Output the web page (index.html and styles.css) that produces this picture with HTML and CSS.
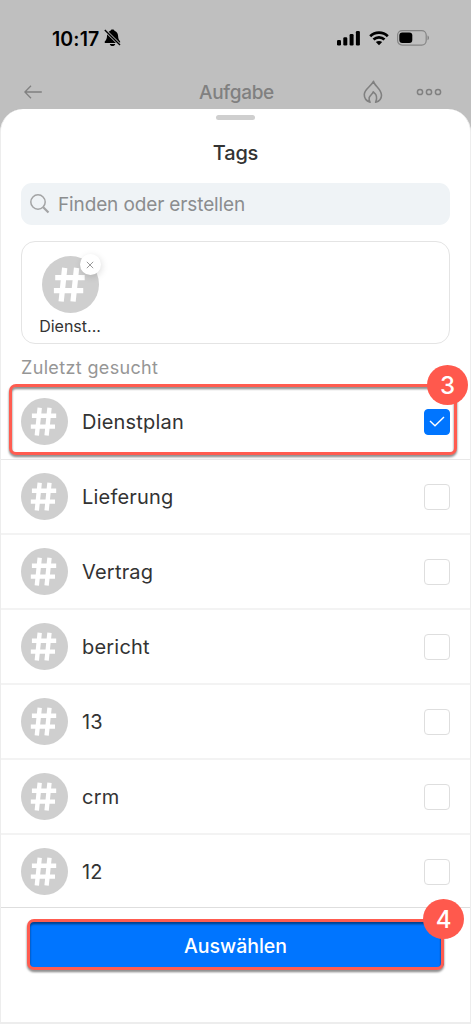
FILE: index.html
```html
<!DOCTYPE html>
<html lang="de">
<head>
<meta charset="utf-8">
<title>Tags</title>
<link rel="stylesheet" href="styles.css">
</head>
<body>
<svg class="defs" aria-hidden="true">
  <symbol id="hash" viewBox="0 0 47 47">
    <circle cx="23.5" cy="23.5" r="23.5" fill="#cfcfcf"/>
    <path d="M18.700 9.800 15.800 37.500M28.500 9.800 25.600 37.500M10.900 17.800H35.200M9.800 28.600H34" fill="none" stroke="#fff" stroke-width="4.400"/>
  </symbol>
</svg>
<div class="phone">
  <header class="backdrop">
    <div class="status">
      <span class="time">10:17</span>
      <svg class="bell" width="17" height="18" viewBox="0 0 17 18"><path d="M8.500 .5C9.600 .5 10.200 1 10.500 1.700 13.200 2.600 14 4.800 14.100 7 14.200 9.800 14.900 11 16 12.300 16.500 13.300 16 14 15.200 14H1.800C.6 14 .3 13 1 12.200 2.300 10.800 2.900 9.500 3 7 3.100 4.500 4 2.600 6.500 1.700 6.800 1 7.400 .5 8.500 .5ZM5.800 15H11.200C10.800 17.700 6.200 17.700 5.800 15Z"/><path d="M.8 1 16 16" stroke="#bfbfbf" stroke-width="3"/><path d="M.8 1 16 16" stroke="#000" stroke-width="1.400"/></svg>
      <svg class="signal" width="23" height="15" viewBox="0 0 23 15"><rect y="9" width="4" height="5.500" rx="1.200"/><rect x="6.300" y="6.200" width="4" height="8.300" rx="1.200"/><rect x="12.600" y="3" width="4" height="11.500" rx="1.200"/><rect x="18.900" width="4" height="14.500" rx="1.200"/></svg>
      <svg class="wifi" width="20" height="15" viewBox="0 0 20 15"><path d="M1.200 5.200C6 .5 14 .5 18.800 5.200M4.500 8.600C7.600 5.700 12.400 5.700 15.500 8.600" fill="none" stroke="#000" stroke-width="2.700"/><path d="M10 14.300 6.800 11.100C8.600 9.500 11.400 9.500 13.200 11.100Z"/></svg>
      <svg class="battery" width="33" height="16" viewBox="0 0 33 16"><rect x=".6" y=".6" width="28.600" height="14.500" rx="4.500" fill="none" stroke="#858585" stroke-width="1.200"/><rect x="2.300" y="2.600" width="13" height="10.500" rx="3"/><path d="M30.500 5.500C32.500 6.200 32.500 9.500 30.500 10.200Z" fill="#858585"/></svg>
    </div>
    <div class="nav">
      <svg class="back" width="18" height="14" viewBox="0 0 18 14"><path d="M7 .8.900 7 7 13.200M1 7H17.800" fill="none" stroke="#808080" stroke-width="1.300"/></svg>
      <span class="nav-title">Aufgabe</span>
      <svg class="fire" width="20" height="24" viewBox="0 0 20 24"><path d="M7.100 22.300C3.400 21 1.200 18.300 1.300 14.500 1.400 8.800 7.900 6.800 10.500 1.300 11.300 5.700 18.300 9.200 18.500 15.200 18.500 18.600 16.200 21.200 12.600 22.300 14.600 18 13.700 14.500 10.300 11.800 9.600 14.200 6.900 15.300 6.200 17.600 5.800 19.200 6.300 20.900 7.100 22.300Z" fill="none" stroke="#808080" stroke-width="1.600" stroke-linejoin="round"/></svg>
      <svg class="more" width="26" height="8" viewBox="0 0 26 8"><g fill="none" stroke="#808080" stroke-width="1.500"><circle cx="4" cy="4" r="2.600"/><circle cx="13" cy="4" r="2.600"/><circle cx="22" cy="4" r="2.600"/></g></svg>
    </div>
  </header>

  <main class="sheet">
    <div class="grabber"></div>
    <h1 class="title">Tags</h1>
    <div class="search">
      <svg width="20" height="20" viewBox="0 0 20 20"><circle cx="8" cy="8" r="7.200" fill="none" stroke="#a3a4a5" stroke-width="1.500"/><path d="M13.200 13.200 18.500 18.500" stroke="#a3a4a5" stroke-width="2.200"/></svg>
      <span class="placeholder">Finden oder erstellen</span>
    </div>
    <section class="selected">
      <div class="chip">
        <div class="chip-icon">
          <svg class="chip-hash"><use href="#hash"/></svg>
          <span class="remove"><svg width="8" height="8" viewBox="0 0 8 8"><path d="M.8.800 7.200 7.200M7.200.800.800 7.200" stroke="#999" stroke-width="1"/></svg></span>
        </div>
        <span class="chip-name">Dienst...</span>
      </div>
    </section>
    <h2 class="recent">Zuletzt gesucht</h2>
    <ul class="list">
      <li class="row"><svg class="avatar"><use href="#hash"/></svg><span class="name">Dienstplan</span><span class="check on"><svg width="16" height="11" viewBox="0 0 16 11"><path d="M1 5 6 9.800 15 1" fill="none" stroke="#fff" stroke-width="1.400"/></svg></span><i class="frame frame-row"></i><b class="badge badge-row">3</b></li>
      <li class="row"><svg class="avatar"><use href="#hash"/></svg><span class="name">Lieferung</span><span class="check"></span></li>
      <li class="row"><svg class="avatar"><use href="#hash"/></svg><span class="name">Vertrag</span><span class="check"></span></li>
      <li class="row"><svg class="avatar"><use href="#hash"/></svg><span class="name">bericht</span><span class="check"></span></li>
      <li class="row"><svg class="avatar"><use href="#hash"/></svg><span class="name">13</span><span class="check"></span></li>
      <li class="row"><svg class="avatar"><use href="#hash"/></svg><span class="name">crm</span><span class="check"></span></li>
      <li class="row"><svg class="avatar"><use href="#hash"/></svg><span class="name">12</span><span class="check"></span></li>
    </ul>
    <footer class="footer">
      <div class="action">
        <button class="submit">Auswählen</button>
        <i class="frame frame-button"></i>
        <b class="badge badge-button">4</b>
      </div>
    </footer>
  </main>
</div>
</body>
</html>
```
FILE: styles.css
```css
* { box-sizing: border-box; }
body { margin: 0; background: #bfbfbf; font-family: Inter, "Liberation Sans", sans-serif; color: #333; }
svg { display: block; flex: none; }
.defs { width: 0; height: 0; position: absolute; }
.phone { width: 471px; height: 1024px; overflow: hidden; display: flex; flex-direction: column; }

.backdrop { height: 109px; flex: none; }
.status { height: 76px; display: flex; align-items: center; padding: 0 41px 0 52px; }
.time { padding-top: 1px; font-size: 19.5px; font-weight: 600; letter-spacing: 0.1px; color: #000; width: 52px; white-space: nowrap; }
.signal { margin-left: auto; }
.wifi { margin-left: 9px; }
.battery { margin-left: 8px; }
.nav { height: 31px; display: flex; align-items: center; padding: 0 29px 0 24px; color: #808080; }
.nav-title { margin-left: 157px; padding-top: 1px; width: 75px; font-size: 19px; font-weight: 500; letter-spacing: -0.3px; }
.fire { margin-left: 89px; }
.more { margin-left: auto; }

.sheet { height: 915px; flex: none; background: #fff; border: 1px solid #ededed; border-top: 0; border-radius: 23px 23px 0 0; display: flex; flex-direction: column; }
.grabber { width: 39px; height: 5px; margin: 6px auto 0; border-radius: 3px; background: #cfcfcf; flex: none; }
.title { margin: 20px 0 16px; height: 27px; line-height: 27px; font-size: 20px; font-weight: 500; letter-spacing: -0.2px; text-align: center; }
.search { height: 42px; margin: 0 20px; padding: 0 9px; border-radius: 11px; background: #eff3f6; display: flex; align-items: center; gap: 8px; flex: none; }
.placeholder { padding-top: 1px; font-size: 19px; letter-spacing: -0.13px; color: #8b8d8f; }
.selected { height: 103px; margin: 16px 20px 0; border: 1px solid #e4e4e4; border-radius: 14px; padding: 14px 0 0 12px; flex: none; }
.chip { width: 72px; display: flex; flex-direction: column; align-items: center; }
.chip-icon { position: relative; width: 57px; height: 57px; }
.chip-hash { width: 57px; height: 57px; }
.remove { position: absolute; right: -2px; top: -2px; width: 21px; height: 21px; border-radius: 50%; background: #fff; box-shadow: 1px 2px 7px rgba(0,0,0,.13); display: flex; align-items: center; justify-content: center; }
.chip-name { font-size: 16px; line-height: 22px; margin-top: 2px; white-space: nowrap; }
.recent { margin: 13px 20px 0; height: 28px; line-height: 21px; font-size: 18px; letter-spacing: 0.35px; font-weight: 400; color: #969696; flex: none; }

.list { list-style: none; margin: 0; padding: 0; height: 522px; flex: none; }
.row { height: 75px; display: flex; align-items: center; padding: 0 20px; border-bottom: 2px solid #f3f3f3; position: relative; }
.row:first-child { padding-bottom: 1px; border-bottom: 1px solid #e8e8e8; }
.row:first-child .name { padding-top: 0; }
.row:last-child { height: 73px; border-bottom: 0; }
.avatar { width: 47px; height: 47px; }
.name { margin-left: 14px; padding-top: 1px; font-size: 20px; letter-spacing: 0.2px; line-height: 26px; }
.check { width: 26px; height: 26px; margin-left: auto; border: 1px solid #dedede; border-radius: 4px; display: flex; align-items: center; justify-content: center; }
.check.on { background: #0075ff; border-color: #0075ff; }
.frame { position: absolute; border: 3px solid #ff5c50; border-radius: 7px; filter: drop-shadow(0.500px 2px 0.800px rgba(0,0,0,.5)); pointer-events: none; }
.frame-row { left: 8px; top: -1px; width: 448px; height: 71px; }
.badge { position: absolute; z-index: 1; width: 41px; height: 40px; border-radius: 50%; background: #ff594d; color: #fff; font-size: 24px; font-weight: 450; line-height: 41px; text-align: center; }
.badge-row { left: 426px; top: -20px; }

.footer { flex: 1; border-top: 1px solid #dedede; border-bottom: 1px solid #ededed; padding: 12px 27px 0 28px; }
.action { position: relative; }
.submit { display: block; width: 415px; height: 49px; border: 0; border-radius: 7px; background: #0075ff; color: #fff; font: 500 19.500px Inter, "Liberation Sans", sans-serif; padding: 2px 2px 0 0; }
.frame-button { left: -2px; top: -1px; width: 417px; height: 51px; }
.badge-button { left: 394px; top: -21px; }
```
